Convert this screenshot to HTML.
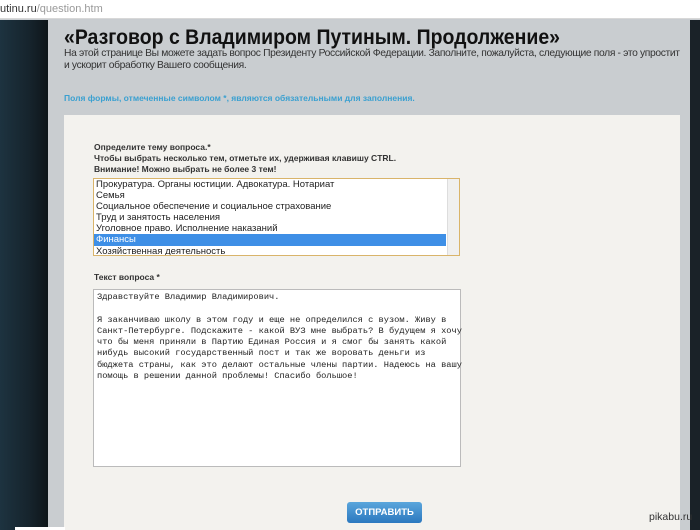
<!DOCTYPE html>
<html><head><meta charset="utf-8"><style>
*{margin:0;padding:0;box-sizing:border-box}
body{width:700px;height:530px;overflow:hidden;position:relative;background:#c8ccd0;font-family:"Liberation Sans",sans-serif}
.top{position:absolute;left:0;top:0;width:700px;height:19px;background:#fff;border-bottom:1px solid #d8d8d8;font-size:11px;color:#333;padding:3px 0 0 0}
.top span{color:#999}
.left{position:absolute;left:0;top:20px;width:48px;height:510px;background:linear-gradient(90deg,#1d3340,#16242d 60%,#0e1519)}
.right{position:absolute;left:690px;top:20px;width:10px;height:510px;background:#1a2228}
.gray{position:absolute;left:48px;top:20px;width:642px;height:510px;background:#c9cdd0}
.title{position:absolute;left:64px;top:26px;font-size:21px;font-weight:bold;color:#111;white-space:nowrap;transform:scaleX(0.927);transform-origin:0 0}
.desc{position:absolute;left:64px;top:48px;width:630px;font-size:10.3px;line-height:12px;color:#333;letter-spacing:-0.35px}
.req{position:absolute;left:64px;top:93px;font-size:8.5px;font-weight:bold;color:#3aa0d0}
.panel{position:absolute;left:64px;top:115px;width:616px;height:415px;background:#f3f2ee}
.lbl{position:absolute;left:94px;font-size:8.5px;font-weight:bold;color:#333;line-height:11px}
.sel{position:absolute;left:93px;top:178px;width:367px;height:78px;background:#fff;border:1px solid #d9b46a;font-size:9.5px;color:#222;line-height:11.1px;overflow:hidden}
.sel .o{padding-left:2px;width:352px;white-space:nowrap}
.sel .hl{background:#3e8fe6;color:#fff}
.sb{position:absolute;right:0;top:0;width:12px;height:76px;background:#f0f0f0;border-left:1px solid #ddd}
.ta{position:absolute;left:93px;top:289px;width:368px;height:178px;background:#fff;border:1px solid #bbb;font-family:"Liberation Mono",monospace;font-size:8.7px;line-height:11.3px;color:#222;padding:2px 3px;white-space:pre}
.btn{position:absolute;left:347px;top:502px;width:75px;height:21px;border-radius:3px;background:linear-gradient(#5aa6dc,#2b78bf);color:#fff;font-size:9.5px;font-weight:bold;text-align:center;line-height:21px}
.wm{position:absolute;left:649px;top:511px;font-size:10.5px;color:#333}
.bot{position:absolute;left:15px;top:527px;width:50px;height:3px;background:#fff}
</style></head><body>
<div class="top">utinu.ru<span>/question.htm</span></div>
<div class="gray"></div><div class="left"></div><div class="right"></div>
<div class="title">«Разговор с Владимиром Путиным. Продолжение»</div>
<div class="desc">На этой странице Вы можете задать вопрос Президенту Российской Федерации. Заполните, пожалуйста, следующие поля - это упростит<br>и ускорит обработку Вашего сообщения.</div>
<div class="req">Поля формы, отмеченные символом *, являются обязательными для заполнения.</div>
<div class="panel"></div>
<div class="lbl" style="top:142px">Определите тему вопроса.*<br>Чтобы выбрать несколько тем, отметьте их, удерживая клавишу CTRL.<br>Внимание! Можно выбрать не более 3 тем!</div>
<div class="sel">
<div class="o">Прокуратура. Органы юстиции. Адвокатура. Нотариат</div>
<div class="o">Семья</div>
<div class="o">Социальное обеспечение и социальное страхование</div>
<div class="o">Труд и занятость населения</div>
<div class="o">Уголовное право. Исполнение наказаний</div>
<div class="o hl">Финансы</div>
<div class="o">Хозяйственная деятельность</div>
<div class="sb"></div>
</div>
<div class="lbl" style="top:272px">Текст вопроса *</div>
<div class="ta">Здравствуйте Владимир Владимирович.

Я заканчиваю школу в этом году и еще не определился с вузом. Живу в
Санкт-Петербурге. Подскажите - какой ВУЗ мне выбрать? В будущем я хочу
что бы меня приняли в Партию Единая Россия и я смог бы занять какой
нибудь высокий государственный пост и так же воровать деньги из
бюджета страны, как это делают остальные члены партии. Надеюсь на вашу
помощь в решении данной проблемы! Спасибо большое!</div>
<div class="btn">ОТПРАВИТЬ</div>
<div class="wm">pikabu.ru</div>
<div class="bot"></div>
</body></html>
